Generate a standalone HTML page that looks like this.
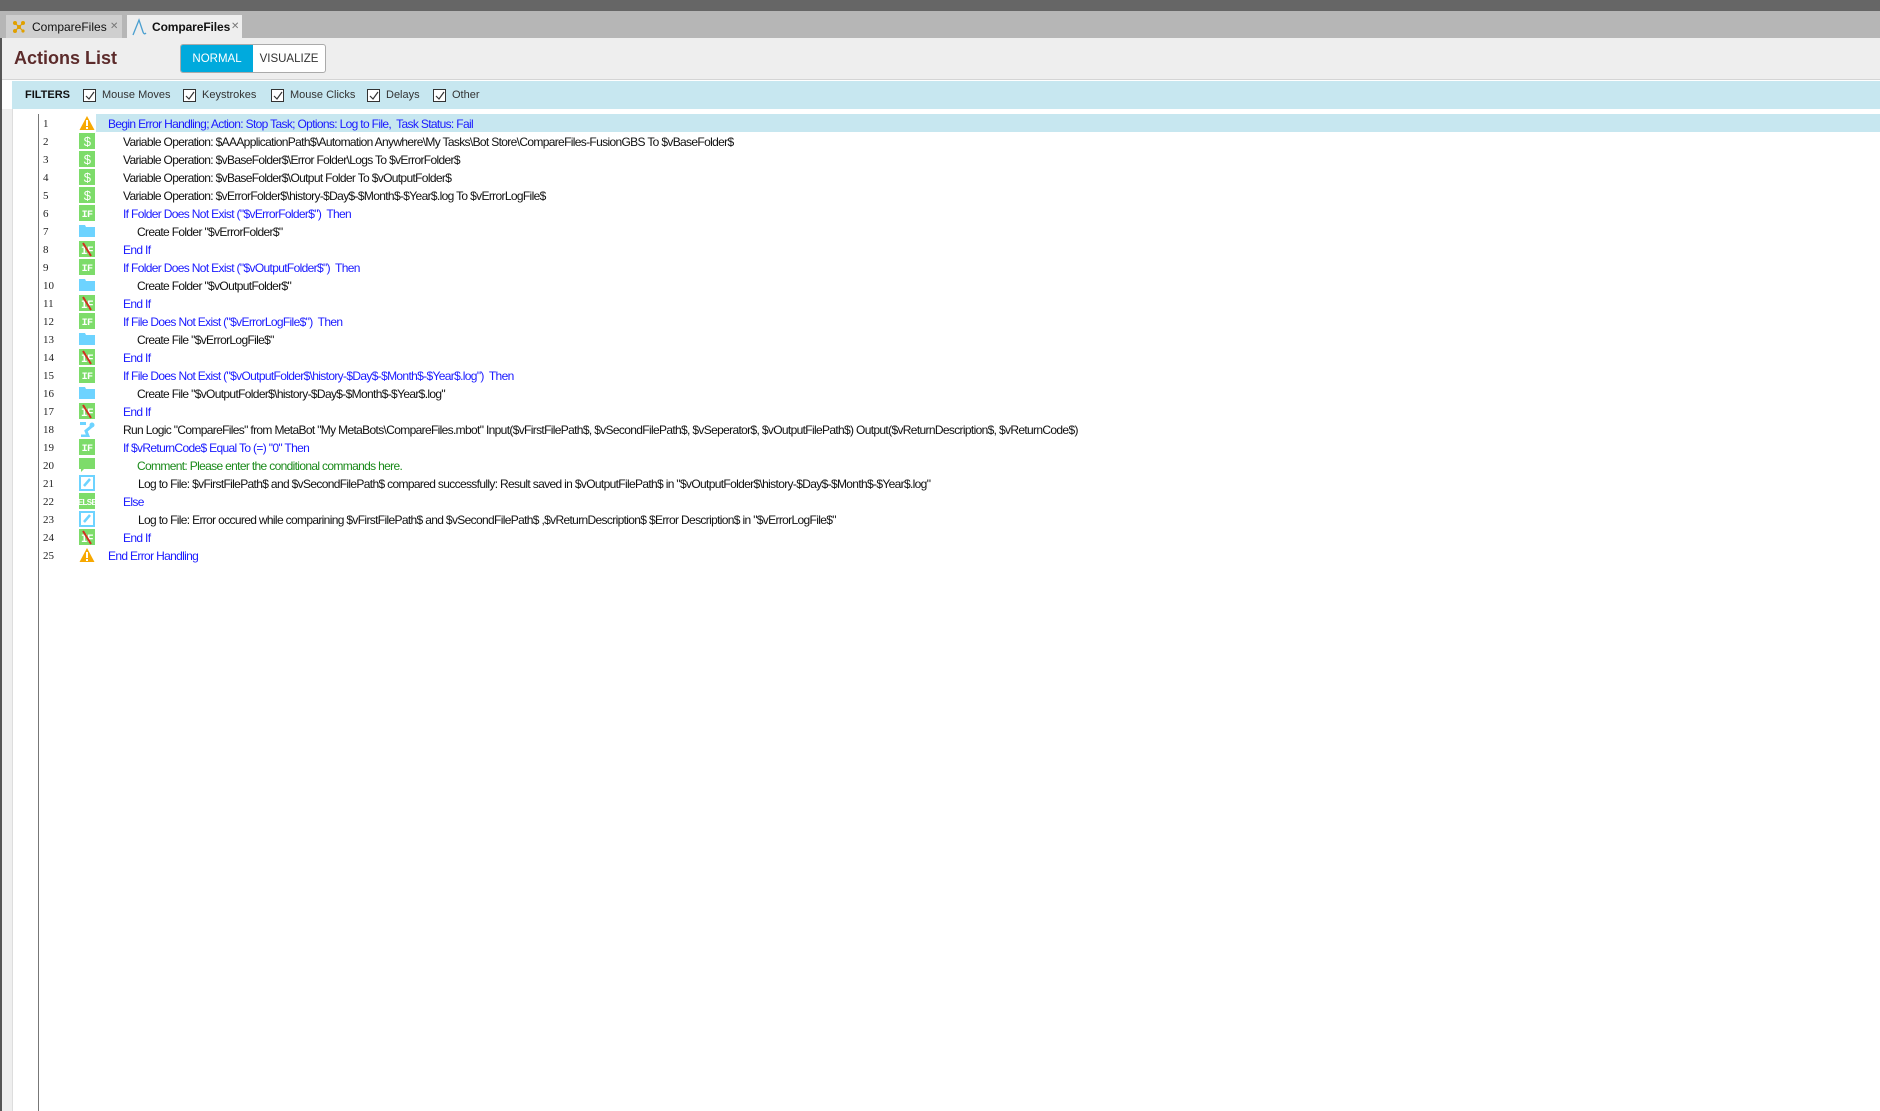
<!DOCTYPE html>
<html><head><meta charset="utf-8"><style>
*{margin:0;padding:0;box-sizing:border-box}
body{width:1880px;height:1111px;overflow:hidden;background:#fff;font-family:"Liberation Sans",sans-serif;position:relative}
.abs{position:absolute}
.top{left:0;top:0;width:1880px;height:11px;background:#666}
.strip{left:0;top:11px;width:1880px;height:27px;background:#b6b6b6}
.tab{top:15px;height:23px;font-size:12px;color:#111;line-height:24px}
.head{left:2px;top:38px;width:1878px;height:42px;background:#eee;border-bottom:1px solid #d4d4d4}
.lside{left:0;top:38px;width:2px;height:1073px;background:#555}
.lgut{left:2px;top:109px;width:11px;height:1002px;background:#eee;border-right:1px solid #ddd}
.filters{left:12px;top:81px;width:1868px;height:28px;background:#c7e7f0;font-size:11px;color:#333;line-height:29px}
.cb{position:absolute;top:8px;width:13px;height:13px;border:1px solid #333;background:#fff}
.cb svg{position:absolute;left:1px;top:1px}
.vline{left:38px;top:114px;width:1px;height:997px;background:#777}
.row{position:absolute;left:0;height:18px;width:1880px;font-size:12px;letter-spacing:-0.66px;line-height:20px;white-space:pre}
.num{position:absolute;left:43px;font-family:"Liberation Serif",serif;font-size:11px;letter-spacing:0;color:#222}
.ic{position:absolute;left:79px;top:1px;width:16px;height:16px}
.t{position:absolute}
.b{color:#1a1aff}.k{color:#111}.g{color:#1a8a1a}
</style></head><body>
<div class="abs top"></div>
<div class="abs strip"></div>
<div class="abs tab" style="left:6px;width:116px;background:#cfcfcf">
<svg class="abs" style="left:6px;top:5px" width="14" height="13" viewBox="0 0 14 13"><g fill="#e0a000"><circle cx="3" cy="3" r="2"/><circle cx="11" cy="3" r="2"/><circle cx="7" cy="7" r="2"/><circle cx="3" cy="11" r="2"/><circle cx="11" cy="11" r="1.6"/></g><path d="M3 3L11 11M11 3L3 11" stroke="#e0a000" stroke-width="1.2"/></svg>
<span class="abs" style="left:26px">CompareFiles</span><span class="abs" style="left:104px;font-size:10px;color:#777">✕</span></div>
<div class="abs tab" style="left:127px;width:115px;background:#eee">
<svg class="abs" style="left:4px;top:3px" width="16" height="18" viewBox="0 0 16 18"><path d="M2 17L8 2L12 14Q13 17 15 15" fill="none" stroke="#4a9fd0" stroke-width="1.3"/></svg>
<span class="abs" style="left:25px;font-weight:bold;letter-spacing:-0.1px">CompareFiles</span><span class="abs" style="left:104px;font-size:10px;color:#777">✕</span></div>
<div class="abs head"></div>
<div class="abs lside"></div>
<div class="abs" style="left:14px;top:48px;font-size:18px;font-weight:bold;color:#5c2b2b">Actions List</div>
<div class="abs" style="left:180px;top:44px;width:146px;height:29px;border:1px solid #aaa;border-radius:3px;background:#fff;overflow:hidden;font-size:11.5px">
<div class="abs" style="left:0;top:0;width:72px;height:27px;background:#00aadd;color:#fff;text-align:center;line-height:29px">NORMAL</div>
<div class="abs" style="left:72px;top:0;width:72px;height:27px;color:#333;text-align:center;line-height:29px">VISUALIZE</div></div>
<div class="abs filters">
<span class="abs" style="left:13px;font-weight:bold;color:#111">FILTERS</span>
<div class="cb" style="left:71px"><svg width="10" height="10" viewBox="0 0 10 10"><path d="M1 5L4 8L9 1" fill="none" stroke="#333" stroke-width="1.2"/></svg></div><span class="abs" style="left:90px">Mouse Moves</span>
<div class="cb" style="left:171px"><svg width="10" height="10" viewBox="0 0 10 10"><path d="M1 5L4 8L9 1" fill="none" stroke="#333" stroke-width="1.2"/></svg></div><span class="abs" style="left:190px">Keystrokes</span>
<div class="cb" style="left:259px"><svg width="10" height="10" viewBox="0 0 10 10"><path d="M1 5L4 8L9 1" fill="none" stroke="#333" stroke-width="1.2"/></svg></div><span class="abs" style="left:278px">Mouse Clicks</span>
<div class="cb" style="left:355px"><svg width="10" height="10" viewBox="0 0 10 10"><path d="M1 5L4 8L9 1" fill="none" stroke="#333" stroke-width="1.2"/></svg></div><span class="abs" style="left:374px">Delays</span>
<div class="cb" style="left:421px"><svg width="10" height="10" viewBox="0 0 10 10"><path d="M1 5L4 8L9 1" fill="none" stroke="#333" stroke-width="1.2"/></svg></div><span class="abs" style="left:440px">Other</span>
</div>
<div class="abs lgut"></div>
<div class="abs vline"></div>
<div class="abs" style="left:96px;top:114px;width:1784px;height:18px;background:#c7e7f0"></div>

<svg width="0" height="0" style="position:absolute"><defs>
<symbol id="warn" viewBox="0 0 16 16"><path d="M8 1L15.5 15H0.5Z" fill="#f7a800"/><rect x="7" y="5" width="2" height="6" fill="#fff"/><rect x="7" y="12" width="2" height="2" fill="#fff"/></symbol>
<symbol id="dol" viewBox="0 0 16 16"><rect width="16" height="16" fill="#7ddc6a"/><text x="8" y="13" font-family="Liberation Sans" font-size="13" fill="#fff" text-anchor="middle">$</text></symbol>
<symbol id="if" viewBox="0 0 16 16"><rect width="16" height="16" fill="#7ddc6a"/><text x="8" y="12" font-family="Liberation Mono" font-size="10" font-weight="bold" fill="#fff" text-anchor="middle">IF</text></symbol>
<symbol id="endif" viewBox="0 0 16 16"><rect width="16" height="16" fill="#7ddc6a"/><text x="8" y="13" font-family="Liberation Mono" font-size="11" font-weight="bold" fill="#fff" text-anchor="middle">IF</text><path d="M4 2L12 15" stroke="#d03020" stroke-width="2"/></symbol>
<symbol id="fold" viewBox="0 0 16 16"><path d="M0 2H6L7 4H16V14H0Z" fill="#6dd3ff"/></symbol>
<symbol id="bot" viewBox="0 0 16 16"><path d="M2 15H9L7 10L13 5" stroke="#6dd3ff" stroke-width="3" fill="none"/><circle cx="13" cy="4" r="2.5" fill="#6dd3ff"/><rect x="1" y="1" width="6" height="3" fill="#6dd3ff"/></symbol>
<symbol id="cmt" viewBox="0 0 16 16"><path d="M0 1H16V12H5L2 15V12H0Z" fill="#7ddc6a"/></symbol>
<symbol id="log" viewBox="0 0 16 16"><rect x="1" y="1" width="14" height="14" fill="none" stroke="#6dd3ff" stroke-width="2"/><path d="M5 11L11 4" stroke="#6dd3ff" stroke-width="2.5"/></symbol>
<symbol id="else" viewBox="0 0 16 16"><rect width="16" height="16" fill="#7ddc6a"/><text x="8" y="12" font-family="Liberation Sans" font-size="8" font-weight="bold" fill="#fff" text-anchor="middle">ELSE</text></symbol>
</defs></svg>

<div id="rows"></div>
<script>
var R=[
["warn",108,"b","Begin Error Handling; Action: Stop Task; Options: Log to File,  Task Status: Fail"],
["dol",123,"k","Variable Operation: $AAApplicationPath$\\Automation Anywhere\\My Tasks\\Bot Store\\CompareFiles-FusionGBS To $vBaseFolder$"],
["dol",123,"k","Variable Operation: $vBaseFolder$\\Error Folder\\Logs To $vErrorFolder$"],
["dol",123,"k","Variable Operation: $vBaseFolder$\\Output Folder To $vOutputFolder$"],
["dol",123,"k","Variable Operation: $vErrorFolder$\\history-$Day$-$Month$-$Year$.log To $vErrorLogFile$"],
["if",123,"b","If Folder Does Not Exist (\"$vErrorFolder$\")  Then"],
["fold",137,"k","Create Folder \"$vErrorFolder$\""],
["endif",123,"b","End If"],
["if",123,"b","If Folder Does Not Exist (\"$vOutputFolder$\")  Then"],
["fold",137,"k","Create Folder \"$vOutputFolder$\""],
["endif",123,"b","End If"],
["if",123,"b","If File Does Not Exist (\"$vErrorLogFile$\")  Then"],
["fold",137,"k","Create File \"$vErrorLogFile$\""],
["endif",123,"b","End If"],
["if",123,"b","If File Does Not Exist (\"$vOutputFolder$\\history-$Day$-$Month$-$Year$.log\")  Then"],
["fold",137,"k","Create File \"$vOutputFolder$\\history-$Day$-$Month$-$Year$.log\""],
["endif",123,"b","End If"],
["bot",123,"k","Run Logic \"CompareFiles\" from MetaBot \"My MetaBots\\CompareFiles.mbot\" Input($vFirstFilePath$, $vSecondFilePath$, $vSeperator$, $vOutputFilePath$) Output($vReturnDescription$, $vReturnCode$)"],
["if",123,"b","If $vReturnCode$ Equal To (=) \"0\" Then"],
["cmt",137,"g","Comment: Please enter the conditional commands here."],
["log",138,"k","Log to File: $vFirstFilePath$ and $vSecondFilePath$ compared successfully: Result saved in $vOutputFilePath$ in \"$vOutputFolder$\\history-$Day$-$Month$-$Year$.log\""],
["else",123,"b","Else"],
["log",138,"k","Log to File: Error occured while comparining $vFirstFilePath$ and $vSecondFilePath$ ,$vReturnDescription$ $Error Description$ in \"$vErrorLogFile$\""],
["endif",123,"b","End If"],
["warn",108,"b","End Error Handling"]];
var h="";
function esc(s){return s.replace(/&/g,"&amp;").replace(/</g,"&lt;")}
R.forEach(function(r,i){h+='<div class="row" style="top:'+(114+i*18)+'px"><span class="num">'+(i+1)+'</span><svg class="ic"><use href="#'+r[0]+'"/></svg><span class="t '+r[2]+'" style="left:'+r[1]+'px">'+esc(r[3])+'</span></div>';});
document.getElementById("rows").innerHTML=h;
</script>
</body></html>
